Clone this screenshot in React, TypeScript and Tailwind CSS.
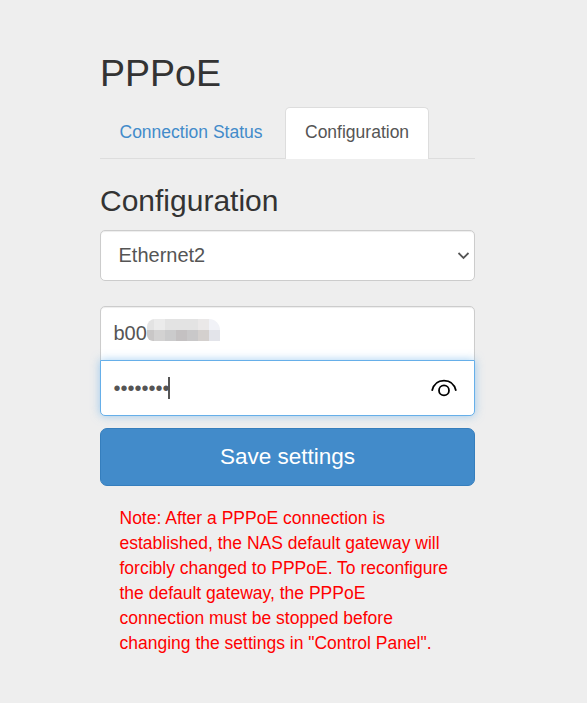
import { useState } from "react";

// Tints of the mosaic that hides the rest of the account name
const maskColumns = [
  { top: "bg-[#e3e3e3]", bottom: "bg-[#c9c7c7]", width: "w-[7px]" },
  { top: "bg-[#ebebeb]", bottom: "bg-[#d3d2d2]", width: "w-[11px]" },
  { top: "bg-[#e3e3e3]", bottom: "bg-[#cbcbcc]", width: "w-[11px]" },
  { top: "bg-[#e3e3e3]", bottom: "bg-[#c4c1c2]", width: "w-[11px]" },
  { top: "bg-[#e3e3e3]", bottom: "bg-[#c9c8c9]", width: "w-[11px]" },
  { top: "bg-[#eae8e8]", bottom: "bg-[#d4d0ce]", width: "w-[11px]" },
  { top: "bg-[#f1f2f7]", bottom: "bg-[#e3e4ea]", width: "w-[11px]" },
];

function AccountMask() {
  return (
    <span className="mb-[7px] flex h-[22px] overflow-hidden rounded-tl-[8px] rounded-tr-[11px] rounded-bl-[6px]">
      {maskColumns.map((col, i) => (
        <span key={i} className={`flex flex-col ${col.width}`}>
          <span className={`h-[11px] ${col.top}`} />
          <span className={`h-[11px] ${col.bottom}`} />
        </span>
      ))}
    </span>
  );
}

export default function App() {
  const [showPassword, setShowPassword] = useState(false);

  return (
    <div className="min-h-screen bg-[#eeeeee] pt-[53px] font-['Liberation_Sans',Arial,sans-serif] text-[17.5px] leading-[25px] text-[#333333]">
      <div className="ml-[100px] w-[375px]">
        <h2 className="h-[54px] text-[37.5px] leading-[41.25px]">PPPoE</h2>

        <nav className="flex h-[52px] border-b border-[#dddddd]">
          <a href="#status" className="w-[185px] pt-[13px] pl-[19.5px] text-[#428bca]">
            Connection Status
          </a>
          <a
            href="#configuration"
            className="h-[52px] w-[144px] rounded-t-[5px] border border-b-0 border-[#dddddd] bg-white pt-[12px] pl-[19px] text-[#555555]"
          >
            Configuration
          </a>
        </nav>

        <h3 className="mt-[25px] h-[46px] text-[30px] leading-[33px]">Configuration</h3>

        <button className="flex h-[51px] w-full items-center justify-between rounded-[5px] border border-[#cccccc] bg-white pr-[4.5px] pl-[17.5px] text-[20px] text-[#555555] shadow-[inset_0_1px_1px_rgba(0,0,0,0.075)]">
          <span>Ethernet2</span>
          <svg width="13" height="8" viewBox="0 0 13 8" fill="none" stroke="#555555" strokeWidth="1.8">
            <path d="M1.5 1L6.5 6L11.5 1" />
          </svg>
        </button>

        <div className="mt-[25px] flex h-[55px] items-center rounded-t-[5px] border border-[#cccccc] bg-white pl-[12.5px] text-[20px] text-[#555555] shadow-[inset_0_1px_1px_rgba(0,0,0,0.075)]">
          <span>b00</span>
          <AccountMask />
        </div>

        <div className="relative -mt-px flex h-[56px] items-center rounded-b-[5px] border border-[#66afe9] bg-white pr-[17px] pl-[12.5px] text-[20px] text-[#555555] shadow-[0_0_10px_rgba(102,175,233,0.6)]">
          <span>{showPassword ? "password" : "••••••••"}</span>
          <span className="-ml-[2px] h-[22px] w-[2px] bg-[#555555]" />
          <button className="ml-auto" onClick={() => setShowPassword(!showPassword)}>
            <svg width="26" height="18" viewBox="0 0 26 18" fill="none" stroke="#000000" strokeWidth="1.8">
              <path d="M1 11.7C2.6 5.5 7.2 1.7 13 1.7S23.4 5.5 25 11.7" />
              <circle cx="13" cy="11.4" r="5" />
            </svg>
          </button>
        </div>

        <button className="mt-[12px] h-[58px] w-full rounded-[7px] border border-[#357ebd] bg-[#428bca] pb-[2px] text-[22.5px] text-white">
          Save settings
        </button>

        <p className="mt-[20px] ml-[19.5px] w-[333px] text-[#ff0000]">
          Note: After a PPPoE connection is established, the NAS default gateway will forcibly changed to
          PPPoE. To reconfigure the default gateway, the PPPoE connection must be stopped before changing
          the settings in "Control Panel".
        </p>
      </div>
    </div>
  );
}
